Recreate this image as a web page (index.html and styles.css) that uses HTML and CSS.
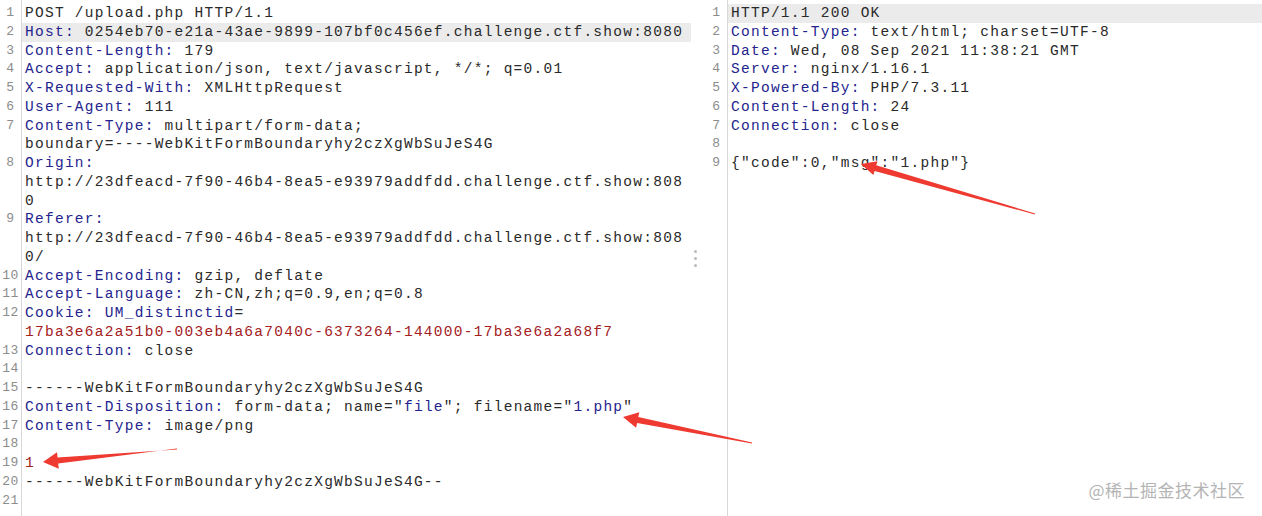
FILE: index.html
```html
<!DOCTYPE html>
<html lang="en">
<head>
    <meta charset="UTF-8">
    <title>upload.php - request / response</title>
    <link rel="stylesheet" href="styles.css">
</head>
<body>
    <div class="viewer">
        <div class="pane pane-req">
            <div class="line"><span class="num">1</span><div class="code">POST /upload.php HTTP/1.1</div></div>
            <div class="line"><span class="num">2</span><div class="code hl"><span class="k">Host:</span> 0254eb70-e21a-43ae-9899-107bf0c456ef.challenge.ctf.show:8080</div></div>
            <div class="line"><span class="num">3</span><div class="code"><span class="k">Content-Length:</span> 179</div></div>
            <div class="line"><span class="num">4</span><div class="code"><span class="k">Accept:</span> application/json, text/javascript, */*; q=0.01</div></div>
            <div class="line"><span class="num">5</span><div class="code"><span class="k">X-Requested-With:</span> XMLHttpRequest</div></div>
            <div class="line"><span class="num">6</span><div class="code"><span class="k">User-Agent:</span> 111</div></div>
            <div class="line"><span class="num">7</span><div class="code"><span class="k">Content-Type:</span> multipart/form-data;<br>boundary=----WebKitFormBoundaryhy2czXgWbSuJeS4G</div></div>
            <div class="line"><span class="num">8</span><div class="code"><span class="k">Origin:</span><br>http://23dfeacd-7f90-46b4-8ea5-e93979addfdd.challenge.ctf.show:808<br>0</div></div>
            <div class="line"><span class="num">9</span><div class="code"><span class="k">Referer:</span><br>http://23dfeacd-7f90-46b4-8ea5-e93979addfdd.challenge.ctf.show:808<br>0/</div></div>
            <div class="line"><span class="num">10</span><div class="code"><span class="k">Accept-Encoding:</span> gzip, deflate</div></div>
            <div class="line"><span class="num">11</span><div class="code"><span class="k">Accept-Language:</span> zh-CN,zh;q=0.9,en;q=0.8</div></div>
            <div class="line"><span class="num">12</span><div class="code"><span class="k">Cookie:</span> <span class="k">UM_distinctid</span>=<br><span class="r">17ba3e6a2a51b0-003eb4a6a7040c-6373264-144000-17ba3e6a2a68f7</span></div></div>
            <div class="line"><span class="num">13</span><div class="code"><span class="k">Connection:</span> close</div></div>
            <div class="line"><span class="num">14</span><div class="code"></div></div>
            <div class="line"><span class="num">15</span><div class="code">------WebKitFormBoundaryhy2czXgWbSuJeS4G</div></div>
            <div class="line"><span class="num">16</span><div class="code"><span class="k">Content-Disposition:</span> form-data; name="<span class="k">file</span>"; filename="<span class="k">1.php</span>"</div></div>
            <div class="line"><span class="num">17</span><div class="code"><span class="k">Content-Type:</span> image/png</div></div>
            <div class="line"><span class="num">18</span><div class="code"></div></div>
            <div class="line"><span class="num">19</span><div class="code"><span class="r">1</span></div></div>
            <div class="line"><span class="num">20</span><div class="code">------WebKitFormBoundaryhy2czXgWbSuJeS4G--</div></div>
            <div class="line"><span class="num">21</span><div class="code"></div></div>
        </div>

        <div class="divider">
            <span class="dot"></span>
            <span class="dot"></span>
            <span class="dot"></span>
        </div>

        <div class="pane pane-res">
            <div class="line"><span class="num">1</span><div class="code hl">HTTP/1.1 200 OK</div></div>
            <div class="line"><span class="num">2</span><div class="code"><span class="k">Content-Type:</span> text/html; charset=UTF-8</div></div>
            <div class="line"><span class="num">3</span><div class="code"><span class="k">Date:</span> Wed, 08 Sep 2021 11:38:21 GMT</div></div>
            <div class="line"><span class="num">4</span><div class="code"><span class="k">Server:</span> nginx/1.16.1</div></div>
            <div class="line"><span class="num">5</span><div class="code"><span class="k">X-Powered-By:</span> PHP/7.3.11</div></div>
            <div class="line"><span class="num">6</span><div class="code"><span class="k">Content-Length:</span> 24</div></div>
            <div class="line"><span class="num">7</span><div class="code"><span class="k">Connection:</span> close</div></div>
            <div class="line"><span class="num">8</span><div class="code"></div></div>
            <div class="line"><span class="num">9</span><div class="code">{"code":0,"msg":"1.php"}</div></div>
        </div>
    </div>

    <!-- red annotation arrows -->
    <svg class="arrows" width="1262" height="516" viewBox="0 0 1262 516">
        <polygon points="1035.1,213.5 876.2,165.2 877.6,161.2 861,164 873.3,175 874.6,171 1034.9,214.5"/>
        <polygon points="752.1,442.5 638.3,417.1 639.3,412.3 623,417 636.1,427.7 637.1,422.9 751.9,443.5"/>
        <polygon points="177.05,449.5 57.6,457.5 57.0,452.3 43,462 58.8,468.8 58.2,463.5 176.95,448.5"/>
    </svg>

    <div class="watermark">@稀土掘金技术社区</div>
</body>
</html>
```

FILE: styles.css
```css
body {
    margin: 0;
    background-color: #fff;
    overflow: hidden;
    font-family: "Liberation Mono", monospace;
}
.viewer {
    display: flex;
    height: 516px;
}
.pane {
    padding-top: 4px;
    background: linear-gradient(#d8d8d8, #d8d8d8) no-repeat 21px 0 / 1px 100%;
}
.pane-req {
    width: 691px;
    flex: none;
}
.pane-res {
    flex: 1;
}
.line {
    display: flex;
    line-height: 18.75px;
}
.num {
    width: 21px;
    flex: none;
    text-align: center;
    font-size: 13px;
    letter-spacing: 0.5px;
    color: #8c8c8c;
}
.code {
    flex: 1;
    margin-left: 1px;
    padding-left: 3px;
    white-space: pre;
    font-size: 14.5px;
    letter-spacing: 1.27px;
    color: #2a2a2a;
}
.code.hl {
    background-color: #ebebeb;
}
.k {
    color: #24248e;
}
.r {
    color: #a3201d;
}
.divider {
    width: 15px;
    flex: none;
    display: flex;
    flex-direction: column;
    justify-content: center;
    gap: 4px;
    padding-left: 3px;
    box-sizing: border-box;
}
.dot {
    width: 3px;
    height: 3px;
    border-radius: 50%;
    background-color: #bbb;
}
.arrows {
    position: absolute;
    top: 0;
    left: 0;
    pointer-events: none;
    fill: #ee3a30;
}
.watermark {
    position: absolute;
    right: 17px;
    bottom: 14px;
    font-family: "Noto Sans CJK SC", sans-serif;
    font-size: 17px;
    color: #b4b4b4;
    letter-spacing: 0.5px;
}
```
